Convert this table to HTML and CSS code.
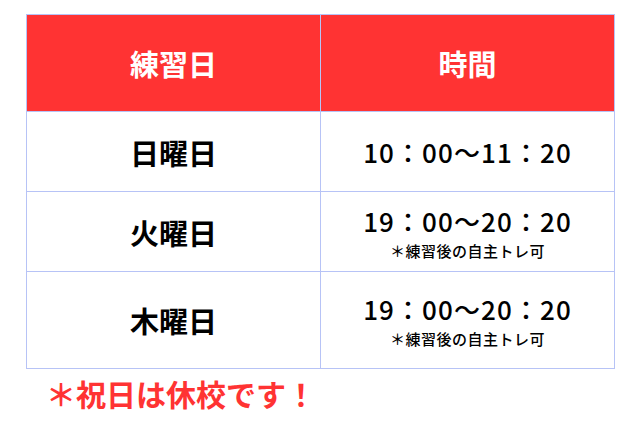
FILE: index.html
```html
<!DOCTYPE html>
<html lang="ja">
<head>
<meta charset="utf-8">
<link rel="stylesheet" href="styles.css">
</head>
<body>
<div class="page">
  <table class="schedule">
    <thead>
      <tr class="head-row">
        <th>練習日</th>
        <th>時間</th>
      </tr>
    </thead>
    <tbody>
      <tr class="row-short">
        <td class="day">日曜日</td>
        <td class="time"><div class="hours">10：00〜11：20</div></td>
      </tr>
      <tr class="row-short">
        <td class="day">火曜日</td>
        <td class="time time-note"><div class="hours">19：00〜20：20</div><div class="note">＊練習後の自主トレ可</div></td>
      </tr>
      <tr class="row-tall">
        <td class="day">木曜日</td>
        <td class="time time-raised"><div class="hours">19：00〜20：20</div><div class="note">＊練習後の自主トレ可</div></td>
      </tr>
    </tbody>
  </table>
  <p class="holiday">＊祝日は休校です！</p>
</div>
</body>
</html>
```
FILE: styles.css
```css
html, body {
  margin: 0;
  padding: 0;
  background: #ffffff;
}
body {
  font-family: "Noto Sans CJK JP", "Noto Sans", sans-serif;
  color: #000000;
}
.page {
  padding: 14px 0 0 26px;
}
.schedule {
  width: 589px;
  border-collapse: collapse;
  table-layout: fixed;
}
.schedule th,
.schedule td {
  border: 1px solid #b7c3f6;
  text-align: center;
  vertical-align: middle;
  padding: 0;
}
.head-row th {
  background: #ff3333;
  color: #ffffff;
  font-size: 29px;
  font-weight: 700;
  height: 96px;
}
.row-short td {
  height: 79px;
}
.row-tall td {
  height: 96px;
}
.day {
  font-size: 29px;
  font-weight: 700;
}
.hours {
  font-size: 26px;
  font-weight: 500;
  line-height: 38px;
  letter-spacing: 1.1px;
}
.note {
  font-size: 15px;
  font-weight: 500;
  line-height: 22px;
  letter-spacing: 0.5px;
}
.time-note {
  padding-top: 3px;
}
.time-raised {
  padding-bottom: 4px;
}
.holiday {
  margin: 4px 0 0 20px;
  color: #ff3333;
  font-size: 30px;
  font-weight: 700;
  line-height: 40px;
}
```
